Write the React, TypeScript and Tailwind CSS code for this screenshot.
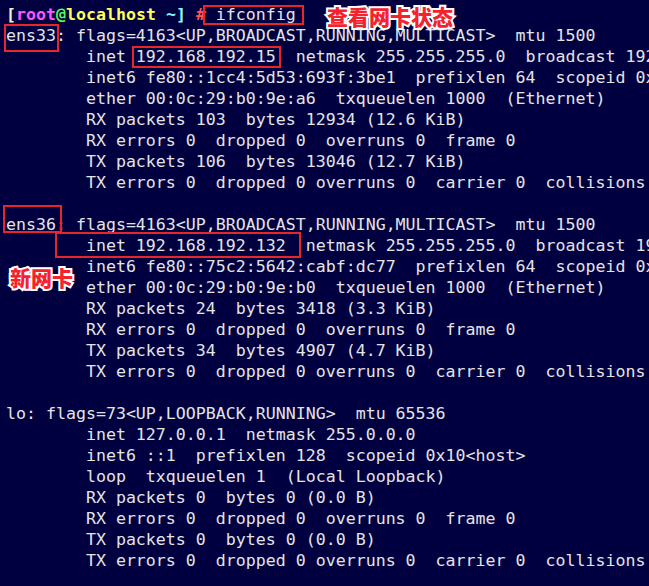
import React from "react";

const lines: string[] = [
  "ens33: flags=4163<UP,BROADCAST,RUNNING,MULTICAST>  mtu 1500",
  "        inet 192.168.192.15  netmask 255.255.255.0  broadcast 192.168.192.255",
  "        inet6 fe80::1cc4:5d53:693f:3be1  prefixlen 64  scopeid 0x20<link>",
  "        ether 00:0c:29:b0:9e:a6  txqueuelen 1000  (Ethernet)",
  "        RX packets 103  bytes 12934 (12.6 KiB)",
  "        RX errors 0  dropped 0  overruns 0  frame 0",
  "        TX packets 106  bytes 13046 (12.7 KiB)",
  "        TX errors 0  dropped 0 overruns 0  carrier 0  collisions 0",
  "",
  "ens36: flags=4163<UP,BROADCAST,RUNNING,MULTICAST>  mtu 1500",
  "        inet 192.168.192.132  netmask 255.255.255.0  broadcast 192.168.192.255",
  "        inet6 fe80::75c2:5642:cabf:dc77  prefixlen 64  scopeid 0x20<link>",
  "        ether 00:0c:29:b0:9e:b0  txqueuelen 1000  (Ethernet)",
  "        RX packets 24  bytes 3418 (3.3 KiB)",
  "        RX errors 0  dropped 0  overruns 0  frame 0",
  "        TX packets 34  bytes 4907 (4.7 KiB)",
  "        TX errors 0  dropped 0 overruns 0  carrier 0  collisions 0",
  "",
  "lo: flags=73<UP,LOOPBACK,RUNNING>  mtu 65536",
  "        inet 127.0.0.1  netmask 255.0.0.0",
  "        inet6 ::1  prefixlen 128  scopeid 0x10<host>",
  "        loop  txqueuelen 1  (Local Loopback)",
  "        RX packets 0  bytes 0 (0.0 B)",
  "        RX errors 0  dropped 0  overruns 0  frame 0",
  "        TX packets 0  bytes 0 (0.0 B)",
  "        TX errors 0  dropped 0 overruns 0  carrier 0  collisions 0",
];

// red annotation rectangles drawn over the terminal
const Box = ({ className }: { className: string }) => (
  <div className={`absolute border-2 border-[#e8262a] ${className}`} />
);

const Note = ({ text, className }: { text: string; className: string }) => (
  <div
    className={`absolute text-[21px] leading-none font-black text-[#f5222d] whitespace-nowrap [-webkit-text-stroke:4px_#ffffff] [paint-order:stroke_fill] ${className}`}
    style={{ fontFamily: '"Noto Sans CJK SC", "Noto Sans", sans-serif' }}
  >
    {text}
  </div>
);

export default function App() {
  return (
    <div className="relative w-[649px] h-[586px] overflow-hidden bg-[#000040]">
      <div
        className="pt-[4px] pl-[6px] text-[16.6px] leading-[21px] text-[#e4e4e4] whitespace-pre"
        style={{ fontFamily: '"DejaVu Sans Mono", "Liberation Mono", monospace' }}
      >
        <div className="font-bold">
          <span className="text-[#f0f0d0]">[</span>
          <span className="text-[#ff55ff]">root</span>
          <span className="text-[#55ff55]">@</span>
          <span className="text-[#ffff55]">localhost</span>
          <span> </span>
          <span className="text-[#88ffff]">~]</span>
          <span> </span>
          <span className="text-[#ff5555]">#</span>
          <span className="font-normal"> ifconfig</span>
        </div>
        {lines.map((l, i) => (
          <div key={i} className="h-[21px]">
            {l}
          </div>
        ))}
      </div>

      <Box className="left-[203px] top-[5px] w-[101px] h-[20px]" />
      <Box className="left-[4px] top-[24px] w-[55px] h-[28px]" />
      <Box className="left-[132px] top-[46px] w-[149px] h-[22px]" />
      <Box className="left-[3px] top-[205px] w-[59px] h-[28px]" />
      <Box className="left-[55px] top-[232px] w-[246px] h-[26px]" />

      <Note text="查看网卡状态" className="left-[327px] top-[6px]" />
      <Note text="新网卡" className="left-[10px] top-[267px]" />
    </div>
  );
}
